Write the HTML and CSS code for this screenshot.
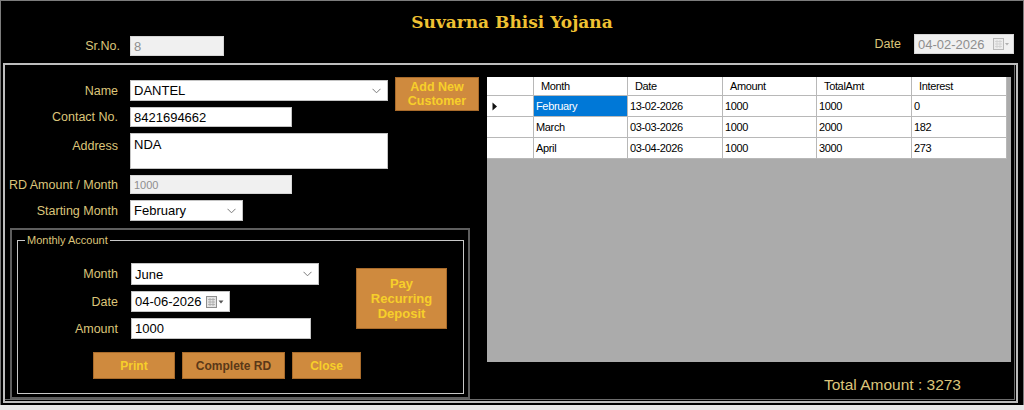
FILE: index.html
```html
<!DOCTYPE html>
<html>
<head>
<meta charset="utf-8">
<link rel="stylesheet" href="styles.css">
</head>
<body>
<div class="window">
  <header class="head">
    <h1 class="title">Suvarna Bhisi Yojana</h1>
    <div class="head-row">
      <div class="srno">
        <span class="lbl">Sr.No.</span>
        <div class="box disabled sr-box">8</div>
      </div>
      <div class="hdate">
        <span class="lbl">Date</span>
        <div class="box disabled picker">
          <span>04-02-2026</span>
          <svg class="cal" width="16" height="12" viewBox="0 0 16 12"><rect x="0.5" y="0.5" width="10" height="11" fill="#ececec" stroke="#b8b8b8"/><path d="M2 3.5h7M2 6h7M2 8.5h7M4 2v8M7 2v8" stroke="#cfcfcf" stroke-width="0.8"/><path d="M12 5h4l-2 2.5z" fill="#b0b0b0"/></svg>
        </div>
      </div>
    </div>
  </header>

  <main class="panel">
    <section class="left">
      <div class="form">
        <span class="lbl">Name</span>
        <div class="box combo name-box"><span>DANTEL</span><svg class="chev" width="9" height="6" viewBox="0 0 9 6"><path d="M0.5 0.8L4.5 4.8L8.5 0.8" fill="none" stroke="#7a7a7a" stroke-width="1"/></svg></div>
        <button class="btn add-btn">Add New<br>Customer</button>

        <span class="lbl">Contact No.</span>
        <div class="box contact-box">8421694662</div>

        <span class="lbl lbl-top">Address</span>
        <div class="box address-box">NDA</div>

        <span class="lbl">RD Amount / Month</span>
        <div class="box disabled rd-box">1000</div>

        <span class="lbl">Starting Month</span>
        <div class="box combo start-box"><span>February</span><svg class="chev" width="9" height="6" viewBox="0 0 9 6"><path d="M0.5 0.8L4.5 4.8L8.5 0.8" fill="none" stroke="#7a7a7a" stroke-width="1"/></svg></div>
      </div>

      <div class="sub">
        <fieldset class="group">
          <legend class="legend">Monthly Account</legend>
          <div class="gform">
            <span class="lbl">Month</span>
            <div class="box combo month-box"><span>June</span><svg class="chev" width="9" height="6" viewBox="0 0 9 6"><path d="M0.5 0.8L4.5 4.8L8.5 0.8" fill="none" stroke="#7a7a7a" stroke-width="1"/></svg></div>
            <button class="btn pay-btn">Pay<br>Recurring<br>Deposit</button>

            <span class="lbl">Date</span>
            <div class="box picker date-box">
              <span>04-06-2026</span>
              <svg class="cal" width="18" height="12" viewBox="0 0 18 12"><rect x="0.5" y="0.5" width="10" height="11" fill="#e4e4e4" stroke="#8e8e8e"/><path d="M2 3.5h7M2 6h7M2 8.5h7M4 2v8M7 2v8" stroke="#a8a8a8" stroke-width="0.8"/><path d="M12.5 4.5h5l-2.5 3z" fill="#555"/></svg>
            </div>

            <span class="lbl">Amount</span>
            <div class="box amount-box">1000</div>
          </div>
          <div class="actions">
            <button class="btn print-btn">Print</button>
            <button class="btn complete-btn">Complete RD</button>
            <button class="btn close-btn">Close</button>
          </div>
        </fieldset>
      </div>
    </section>

    <section class="right">
      <div class="dgv">
        <div class="drow dhead">
          <div class="cell rh"></div>
          <div class="cell">Month</div>
          <div class="cell">Date</div>
          <div class="cell">Amount</div>
          <div class="cell">TotalAmt</div>
          <div class="cell">Interest</div>
        </div>
        <div class="drow">
          <div class="cell rh"><svg width="6" height="9" viewBox="0 0 6 9"><path d="M0.5 0.5L5 4.5L0.5 8.5z" fill="#111"/></svg></div>
          <div class="cell sel">February</div>
          <div class="cell">13-02-2026</div>
          <div class="cell">1000</div>
          <div class="cell">1000</div>
          <div class="cell">0</div>
        </div>
        <div class="drow">
          <div class="cell rh"></div>
          <div class="cell">March</div>
          <div class="cell">03-03-2026</div>
          <div class="cell">1000</div>
          <div class="cell">2000</div>
          <div class="cell">182</div>
        </div>
        <div class="drow">
          <div class="cell rh"></div>
          <div class="cell">April</div>
          <div class="cell">03-04-2026</div>
          <div class="cell">1000</div>
          <div class="cell">3000</div>
          <div class="cell">273</div>
        </div>
      </div>
      <div class="total">Total Amount : 3273</div>
    </section>
  </main>
</div>
<div class="strip"></div>
</body>
</html>
```

FILE: styles.css
```css
* { box-sizing: border-box; }
html, body { margin: 0; padding: 0; }
body {
  width: 1024px;
  height: 410px;
  overflow: hidden;
  background: #e8e8e8;
  font-family: "Liberation Sans", Arial, sans-serif;
}
.window {
  height: 405px;
  background: #000;
  border: 1px solid #7c7c7c;
  border-bottom: 0;
}
.strip { height: 5px; background: #e8e8e8; }

.head { height: 62px; }
.title {
  margin: 0;
  padding-top: 9px;
  height: 33px;
  text-align: center;
  font: bold 17px/24px "DejaVu Serif", serif;
  color: #efc132;
}
.head-row {
  display: flex;
  justify-content: space-between;
  align-items: flex-start;
  padding-right: 9px;
}
.srno { display: flex; align-items: center; margin-top: 2px; }
.srno .lbl { width: 119px; text-align: right; margin-right: 10px; }
.hdate { display: flex; align-items: center; }
.hdate .lbl { margin-right: 13px; }

.lbl { color: #dcc57a; font-size: 12.5px; white-space: nowrap; }

.box {
  height: 20px;
  background: #fff;
  border: 1px solid #c4c4c4;
  font-size: 13px;
  color: #000;
  padding: 0 3px;
  display: flex;
  align-items: center;
  white-space: nowrap;
}
.disabled { background: #f0f0f0; color: #8e8e8e; border-color: #d6d6d6; }
.sr-box { width: 94px; }
.picker { width: 100px; justify-content: space-between; padding-right: 4px; }
.combo { justify-content: space-between; padding-right: 6px; }
.chev { flex: none; }
.cal { flex: none; }

.panel {
  display: flex;
  margin-left: 2px;
  width: 1015px;
  height: 340px;
  border: 2px solid #bdbdbd;
  box-shadow: inset -1px -1px 0 #000, inset -2px -2px 0 #6c6c6c;
}

.left { width: 477px; padding-top: 15px; }
.form {
  display: grid;
  grid-template-columns: 125px 265px 84px;
  row-gap: 6px;
  align-items: start;
}
.form > .lbl, .gform > .lbl {
  grid-column: 1;
  display: flex;
  align-items: center;
  justify-content: flex-end;
  align-self: stretch;
}
.form > .box, .gform > .box { grid-column: 2; }
.form > .lbl { padding-right: 12px; }
.form > .lbl-top { align-items: flex-start; padding-top: 6px; }
.name-box { width: 258px; height: 21px; }
.contact-box { width: 162px; }
.address-box { width: 258px; height: 36px; align-items: flex-start; padding-top: 3px; }
.rd-box { width: 162px; height: 19px; font-size: 11px; }
.start-box { width: 113px; height: 21px; }

.btn {
  margin: 0;
  padding: 0;
  border: 1px solid #a96b2b;
  background: #cf8a3e;
  color: #f7cf2a;
  font: bold 12px/14px "Liberation Sans", Arial, sans-serif;
  text-align: center;
}
.add-btn {
  grid-column: 3;
  grid-row: 1 / span 2;
  align-self: start;
  margin-top: -3px;
  width: 84px;
  height: 34px;
  font-size: 12.5px;
  line-height: 14px;
}

.sub {
  margin: 7px 0 0 5px;
  width: 460px;
  height: 171px;
  border: 2px solid #5e5e5e;
  padding: 4px 0 0 5px;
}
.group {
  margin: 0;
  padding: 0;
  width: 447px;
  height: 160px;
  border: 1px solid #c8c8c8;
  min-width: 0;
}
.legend {
  margin-left: 7px;
  padding: 0 2px;
  color: #dcc57a;
  font-size: 11px;
  line-height: 13px;
}
.gform {
  display: grid;
  grid-template-columns: 113px 225px 91px;
  row-gap: 6px;
  padding-top: 16px;
  align-items: start;
}
.gform > .lbl { padding-right: 13px; }
.month-box { width: 188px; height: 22px; }
.date-box { width: 99px; height: 21px; padding-right: 5px; }
.amount-box { width: 180px; height: 21px; }
.pay-btn {
  grid-column: 3;
  grid-row: 1 / span 3;
  margin-top: 5px;
  width: 91px;
  height: 61px;
  font-size: 13px;
  line-height: 15px;
}
.actions {
  display: flex;
  gap: 7px;
  margin-top: 13px;
  padding-left: 75px;
}
.actions .btn { height: 27px; }
.print-btn { width: 82px; }
.complete-btn { width: 103px; color: #5a3818; }
.close-btn { width: 69px; }

.right { margin-left: 5px; padding-top: 12px; width: 524px; }
.dgv {
  width: 524px;
  height: 285px;
  background: #ababab;
}
.drow {
  display: grid;
  grid-template-columns: 47px 94px 95px 94px 95px 95px;
  width: 520px;
  height: 21px;
}
.dhead { height: 19px; }
.cell {
  background: #fff;
  border-right: 1px solid #b8b8b8;
  border-bottom: 1px solid #b8b8b8;
  font-size: 11px;
  letter-spacing: -0.35px;
  color: #000;
  display: flex;
  align-items: center;
  padding-left: 2px;
  white-space: nowrap;
  overflow: hidden;
}
.dhead .cell { padding-left: 7px; }
.rh { padding-left: 5px; }
.sel { background: #0078d7; color: #fff; }
.total {
  margin-top: 14px;
  text-align: right;
  padding-right: 50px;
  font-size: 15.5px;
  color: #dcc57a;
}
```
